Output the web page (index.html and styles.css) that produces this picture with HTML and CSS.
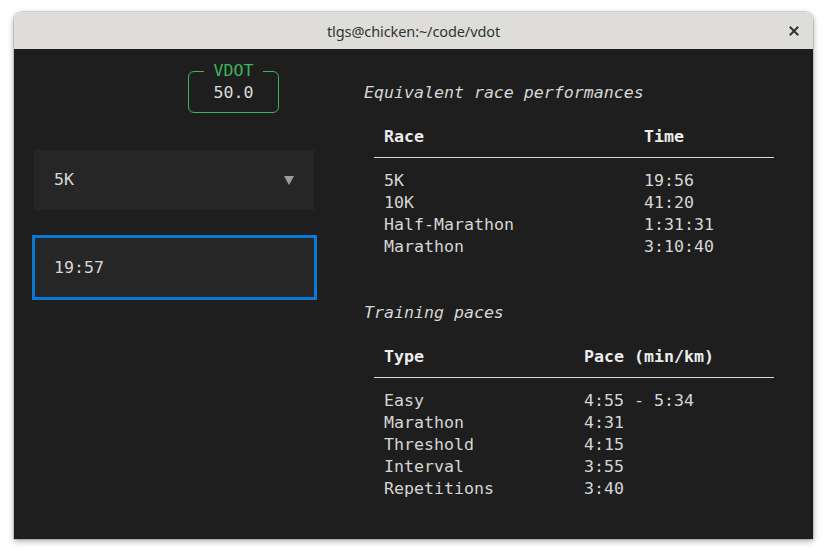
FILE: index.html
```html
<!DOCTYPE html>
<html lang="en">
<head>
<meta charset="utf-8">
<title>vdot</title>
<link rel="stylesheet" href="styles.css">
</head>
<body>
<div class="window">
  <header class="titlebar">
    <span class="title">tlgs@chicken:~/code/vdot</span>
    <button class="close" aria-label="Close">
      <svg width="10" height="10" viewBox="0 0 10 10"><path d="M1.5 1.5 L8.5 8.5 M8.5 1.5 L1.5 8.5" stroke="#2e3436" stroke-width="2" stroke-linecap="square"/></svg>
    </button>
  </header>
  <main class="term">
    <section class="left">
      <fieldset class="vdot">
        <legend>VDOT</legend>
        <div class="vdot-value">50.0</div>
      </fieldset>
      <div class="select">
        <span>5K</span>
        <span class="arrow"></span>
      </div>
      <div class="input">19:57</div>
    </section>
    <section class="right">
      <h2 class="heading">Equivalent race performances</h2>
      <div class="table race-table">
        <div class="row head"><span class="c1">Race</span><span>Time</span></div>
        <div class="sep"></div>
        <div class="row"><span class="c1">5K</span><span>19:56</span></div>
        <div class="row"><span class="c1">10K</span><span>41:20</span></div>
        <div class="row"><span class="c1">Half-Marathon</span><span>1:31:31</span></div>
        <div class="row"><span class="c1">Marathon</span><span>3:10:40</span></div>
      </div>
      <h2 class="heading second">Training paces</h2>
      <div class="table pace-table">
        <div class="row head"><span class="c1">Type</span><span>Pace (min/km)</span></div>
        <div class="sep"></div>
        <div class="row"><span class="c1">Easy</span><span>4:55 - 5:34</span></div>
        <div class="row"><span class="c1">Marathon</span><span>4:31</span></div>
        <div class="row"><span class="c1">Threshold</span><span>4:15</span></div>
        <div class="row"><span class="c1">Interval</span><span>3:55</span></div>
        <div class="row"><span class="c1">Repetitions</span><span>3:40</span></div>
      </div>
    </section>
  </main>
</div>
</body>
</html>
```
FILE: styles.css
```css
html, body {
  margin: 0;
  padding: 0;
  background: #ffffff;
}
body {
  padding: 12px 13px 0 14px;
  width: 826px;
  height: 555px;
  box-sizing: border-box;
  overflow: hidden;
}
.window {
  width: 799px;
  height: 527px;
  border-radius: 8px 8px 0 0;
  overflow: hidden;
  box-shadow: 0 2px 6px rgba(0, 0, 0, 0.35), 0 0 0 1px rgba(0, 0, 0, 0.12);
  display: flex;
  flex-direction: column;
}
.titlebar {
  height: 37px;
  flex: none;
  background: #deddda;
  display: flex;
  align-items: center;
  justify-content: center;
  position: relative;
}
.title {
  font-family: "Noto Sans", "Open Sans", sans-serif;
  font-size: 14.5px;
  color: #2e3436;
  letter-spacing: -0.1px;
}
.close {
  position: absolute;
  right: 14px;
  top: 14px;
  width: 10px;
  height: 10px;
  padding: 0;
  border: 0;
  background: none;
  display: flex;
}
.term {
  flex: 1;
  background: #1e1e1e;
  display: flex;
  gap: 47px;
  padding: 0 0 0 18px;
  font-family: "DejaVu Sans Mono", monospace;
  font-size: 16.6px;
  line-height: 22px;
  color: #d6d6d6;
}
.left {
  width: 285px;
  display: flex;
  flex-direction: column;
  padding-top: 11px;
}
.vdot {
  margin: 0 0 0 156px;
  width: 91px;
  box-sizing: border-box;
  border: 1px solid #3fb45a;
  border-radius: 6px;
  padding: 0 0 8px 0;
  text-align: center;
}
.vdot legend {
  margin: 0 auto;
  padding: 0 10px;
  color: #3fb45a;
  line-height: 22px;
}
.vdot-value {
  line-height: 22px;
  color: #dcdcdc;
}
.select {
  margin: 37px 3px 0 2px;
  background: #262626;
  padding: 19px 20px;
  display: flex;
  justify-content: space-between;
  align-items: center;
}
.arrow {
  width: 0;
  height: 0;
  border-left: 5px solid transparent;
  border-right: 5px solid transparent;
  border-top: 9px solid #9c9c9c;
  margin-top: 1px;
}
.input {
  margin-top: 25px;
  border: 3px solid #0a78d7;
  background: #262626;
  padding: 19px 19px 18px 19px;
}
.right {
  padding-top: 33px;
  display: flex;
  flex-direction: column;
}
.heading {
  margin: 0;
  font-size: 16.6px;
  font-weight: normal;
  font-style: italic;
  line-height: 22px;
  color: #d6d6d6;
}
.heading.second {
  margin-top: 44px;
}
.table {
  margin: 22px 0 0 10px;
  width: 400px;
}
.row {
  display: flex;
  padding-left: 10px;
  height: 22px;
}
.race-table .c1 {
  width: 260px;
}
.pace-table .c1 {
  width: 200px;
}
.row.head {
  font-weight: bold;
  color: #ececec;
}
.sep {
  height: 1px;
  background: #d8d8d8;
  margin: 9px 0 12px 0;
}
```
